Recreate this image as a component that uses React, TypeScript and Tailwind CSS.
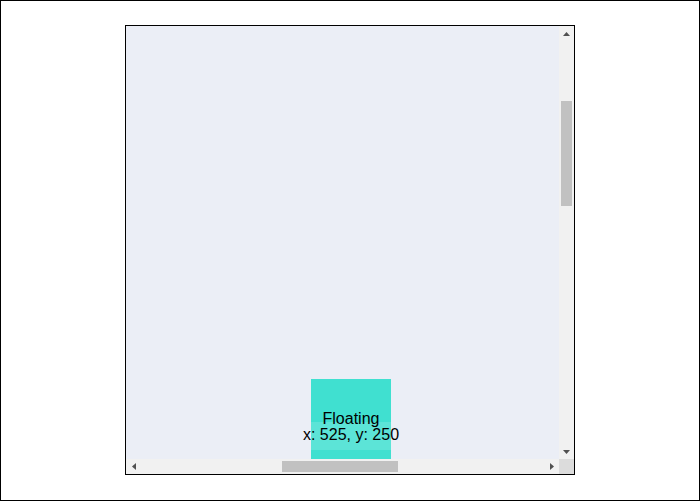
import { useEffect, useRef } from "react";

function Arrow({ dir }: { dir: "up" | "down" | "left" | "right" }) {
  const vertical = dir === "up" || dir === "down";
  const points =
    dir === "up"
      ? "3.5,0 7,4 0,4"
      : dir === "down"
      ? "0,0 7,0 3.5,4"
      : dir === "left"
      ? "4,0 4,7 0,3.5"
      : "0,0 4,3.5 0,7";
  return (
    <svg
      width={vertical ? 7 : 4}
      height={vertical ? 4 : 7}
      viewBox={vertical ? "0 0 7 4" : "0 0 4 7"}
      className="fill-[#505050]"
    >
      <polygon points={points} />
    </svg>
  );
}

export default function App() {
  const scrollRef = useRef<HTMLDivElement>(null);

  useEffect(() => {
    const el = scrollRef.current;
    if (!el) return;
    el.scrollLeft = 525;
    el.scrollTop = 250;
  }, []);

  return (
    <div
      className="w-[700px] h-[501px] border border-black bg-white flex justify-center pt-6"
      style={{ fontFamily: '"Liberation Sans", Arial, sans-serif' }}
    >
      <div className="w-[450px] h-[450px] border border-black grid grid-cols-[433px_15px] grid-rows-[433px_15px]">
        {/* viewport */}
        <div ref={scrollRef} className="overflow-hidden bg-[#ebeef6]">
          <div className="relative w-[1500px] h-[1660px]">
            <div className="absolute left-[710px] top-[603px] w-20 h-20 bg-[#40e0d0] flex flex-col items-center pt-[32px] text-base leading-4 text-black">
              <div className="absolute left-0 right-0 top-[43px] h-[28px] bg-white/15" />
              <span className="relative whitespace-nowrap">Floating</span>
              <span className="relative whitespace-nowrap">x: 525, y: 250</span>
            </div>
          </div>
        </div>

        {/* vertical scrollbar */}
        <div className="bg-[#f1f1f1] flex flex-col">
          <div className="h-[15px] flex items-center justify-center">
            <Arrow dir="up" />
          </div>
          <div className="flex-1 px-[2px]">
            <div className="mt-[60px] h-[105px] bg-[#c1c1c1]" />
          </div>
          <div className="h-[15px] flex items-center justify-center">
            <Arrow dir="down" />
          </div>
        </div>

        {/* horizontal scrollbar */}
        <div className="bg-[#f1f1f1] flex">
          <div className="w-[15px] flex items-center justify-center">
            <Arrow dir="left" />
          </div>
          <div className="flex-1 py-[2px]">
            <div className="ml-[141px] w-[116px] h-full bg-[#c1c1c1]" />
          </div>
          <div className="w-[15px] flex items-center justify-center">
            <Arrow dir="right" />
          </div>
        </div>

        <div className="bg-[#dcdcdc]" />
      </div>
    </div>
  );
}
